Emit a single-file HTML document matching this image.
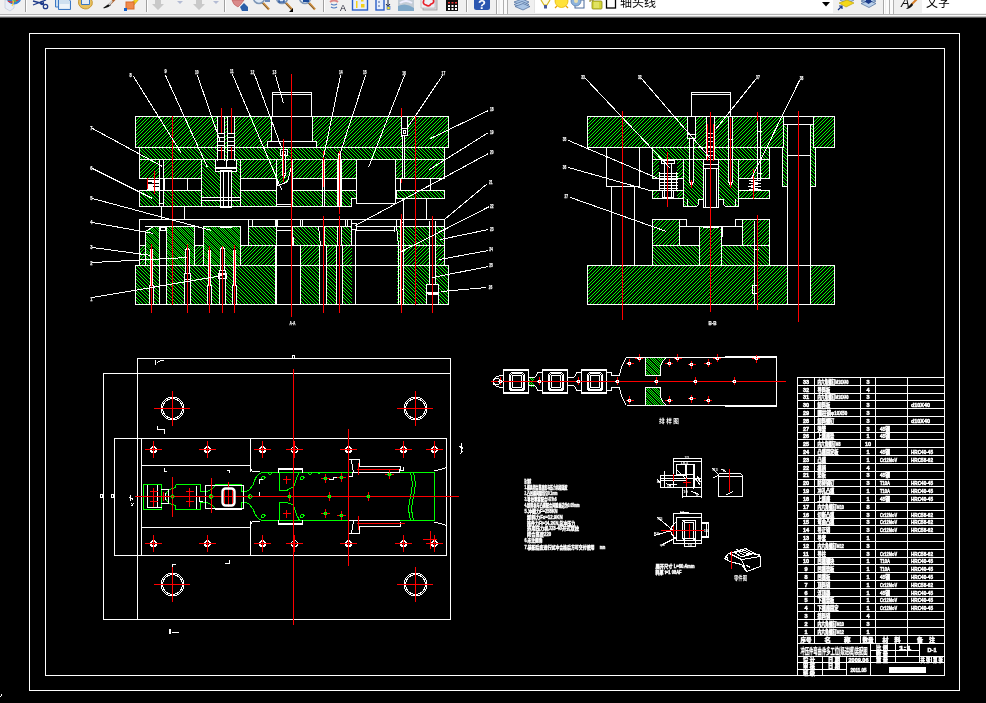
<!DOCTYPE html>
<html><head><meta charset="utf-8"><title>CAD</title>
<style>
html,body{margin:0;padding:0;background:#000;overflow:hidden}
body{width:986px;height:703px;position:relative;font-family:"Liberation Sans","Noto Sans CJK SC",sans-serif}
svg{position:absolute;left:0;top:0;display:block;will-change:transform}
.n{font:bold 6px "Liberation Sans","Noto Sans CJK SC",sans-serif;fill:#fff;text-anchor:middle;stroke:#fff;stroke-width:.25px}
.d{font:bold 4px "Liberation Sans",sans-serif;fill:#fff;text-anchor:middle}
.t{font:4.6px "Liberation Sans","Noto Sans CJK SC",sans-serif;fill:#fff;stroke:#fff;stroke-width:.4px}
.tt{font:bold 5.5px "Liberation Sans","Noto Sans CJK SC",sans-serif;fill:#fff;stroke:#fff;stroke-width:.5px}
.tk{font:bold 6px "Liberation Sans","Noto Sans CJK SC",sans-serif;fill:#000}
.tz{font:bold 8.5px "Liberation Sans","Noto Sans CJK SC",sans-serif;fill:#fff;stroke:#fff;stroke-width:.3px}
.tb{font:6px "Liberation Sans","Noto Sans CJK SC",sans-serif;fill:#fff;font-weight:bold}
#tb{position:absolute;left:0;top:0;width:986px;height:18px;background:#f0f0f0;overflow:hidden}
</style></head><body>
<svg width="986" height="703" viewBox="0 0 986 703">
<defs>
<pattern id="ha" width="7" height="7" patternUnits="userSpaceOnUse"><path d="M0 0h1v1h-1zM0 4h1v1h-1zM1 3h1v1h-1zM1 6h1v1h-1zM2 2h1v1h-1zM2 5h1v1h-1zM3 1h1v1h-1zM3 4h1v1h-1zM4 0h1v1h-1zM4 3h1v1h-1zM5 2h1v1h-1zM5 6h1v1h-1zM6 1h1v1h-1zM6 5h1v1h-1z" fill="#0f0" shape-rendering="crispEdges"/></pattern>
<pattern id="hb" width="7" height="7" patternUnits="userSpaceOnUse"><path d="M0 0h1v1h-1zM0 3h1v1h-1zM1 1h1v1h-1zM1 4h1v1h-1zM2 2h1v1h-1zM2 5h1v1h-1zM3 3h1v1h-1zM3 6h1v1h-1zM4 0h1v1h-1zM4 4h1v1h-1zM5 1h1v1h-1zM5 5h1v1h-1zM6 2h1v1h-1zM6 6h1v1h-1z" fill="#0f0" shape-rendering="crispEdges"/></pattern>
<pattern id="hx" width="3" height="3" patternUnits="userSpaceOnUse"><path d="M0 0h1v1h-1zM1 1h1v1h-1zM2 2h1v1h-1zM0 2h1v1h-1zM2 0h1v1h-1z" fill="#0f0" shape-rendering="crispEdges"/></pattern>
<pattern id="hd" width="7" height="7" patternUnits="userSpaceOnUse"><path d="M0 0h1v1h-1zM0 4h1v1h-1zM1 3h1v1h-1zM1 6h1v1h-1zM2 2h1v1h-1zM2 5h1v1h-1zM3 1h1v1h-1zM3 4h1v1h-1zM4 0h1v1h-1zM4 3h1v1h-1zM5 2h1v1h-1zM5 6h1v1h-1zM6 1h1v1h-1zM6 5h1v1h-1z" fill="#0f0" shape-rendering="crispEdges"/></pattern>
<pattern id="hc" width="7" height="7" patternUnits="userSpaceOnUse"><path d="M0 0h1v1h-1zM0 2h1v1h-1zM0 5h1v1h-1zM1 1h1v1h-1zM1 3h1v1h-1zM1 6h1v1h-1zM2 0h1v1h-1zM2 2h1v1h-1zM2 4h1v1h-1zM3 1h1v1h-1zM3 3h1v1h-1zM3 5h1v1h-1zM4 2h1v1h-1zM4 4h1v1h-1zM4 6h1v1h-1zM5 0h1v1h-1zM5 3h1v1h-1zM5 5h1v1h-1zM6 1h1v1h-1zM6 4h1v1h-1zM6 6h1v1h-1z" fill="#0f0" shape-rendering="crispEdges"/></pattern>
</defs>
<rect width="986" height="703" fill="#000"/>
<g shape-rendering="crispEdges">
<rect x="135" y="116" width="314" height="32" fill="url(#ha)"/>
<rect x="139" y="147" width="306" height="13" fill="url(#hb)"/>
<rect x="139" y="159" width="306" height="20" fill="url(#ha)"/>
<rect x="139" y="190" width="306" height="17" fill="url(#hb)"/>
<rect x="201" y="159" width="40" height="39" fill="#000"/>
<rect x="201" y="159" width="40" height="39" fill="url(#hb)"/>
<rect x="201" y="200" width="40" height="7" fill="#000"/>
<rect x="201" y="200" width="40" height="7" fill="url(#hb)"/>
<rect x="276" y="178" width="17" height="13" fill="#000"/>
<polygon points="277,177 292,177 288,182 283.5,184 277,186" fill="url(#ha)"/>
<rect x="145" y="226" width="300" height="20" fill="url(#hb)"/>
<rect x="139" y="245" width="306" height="21" fill="url(#hd)"/>
<rect x="135" y="265" width="314" height="40" fill="url(#hb)"/>
<rect x="145" y="226" width="15" height="39" fill="#000"/>
<rect x="145" y="226" width="15" height="39" fill="url(#hc)"/>
<rect x="166" y="226" width="29" height="39" fill="#000"/>
<rect x="166" y="226" width="29" height="39" fill="url(#hc)"/>
<rect x="203" y="226" width="38" height="39" fill="#000"/>
<rect x="203" y="226" width="38" height="39" fill="url(#hc)"/>
<rect x="352" y="223" width="5" height="7" fill="url(#ha)"/>
<rect x="396" y="219" width="49" height="8" fill="url(#ha)"/>
<rect x="587" y="116" width="248" height="32" fill="url(#ha)"/>
<rect x="652" y="147" width="118" height="13" fill="url(#hb)"/>
<rect x="652" y="159" width="118" height="20" fill="url(#ha)"/>
<rect x="652" y="190" width="118" height="9" fill="url(#ha)"/>
<rect x="683" y="159" width="56" height="49" fill="#000"/>
<polygon points="683.5,159.5 738.5,159.5 738.5,206 725.5,206 723.5,204 723.5,199 698.5,199 698.5,204 696.5,206 683.5,206" fill="url(#hb)"/>
<rect x="783" y="116" width="31" height="32" fill="#000"/>
<rect x="783" y="124" width="5" height="24" fill="url(#hb)"/>
<rect x="810" y="124" width="4" height="24" fill="url(#hb)"/>
<rect x="782" y="147" width="6" height="40" fill="url(#hb)"/>
<rect x="810" y="147" width="6" height="40" fill="url(#hb)"/>
<rect x="587" y="265" width="248" height="40" fill="url(#ha)"/>
<rect x="652" y="219" width="118" height="27" fill="url(#ha)"/>
<rect x="652" y="245" width="118" height="21" fill="url(#hb)"/>
<rect x="699" y="226" width="23" height="40" fill="#000"/>
<rect x="699" y="226" width="23" height="40" fill="url(#ha)"/>
<rect x="529" y="377" width="5" height="10" fill="url(#hc)"/>
<path d="M646 358H666Q661 362 660 368V375H646Z" fill="url(#hc)"/>
<path d="M646 405H666Q661 401 660 395V388H646Z" fill="url(#hc)"/>
<g fill="#000">
<rect x="271" y="116" width="42" height="32"/>
<rect x="267" y="141" width="50" height="7"/>
<rect x="217" y="116" width="8" height="50"/>
<rect x="227" y="116" width="8" height="50"/>
<rect x="215" y="159" width="22" height="13"/>
<rect x="201" y="198" width="40" height="2"/>
<rect x="220" y="170" width="12" height="38"/>
<rect x="139" y="179" width="63" height="11"/>
<rect x="241" y="179" width="36" height="11"/>
<rect x="293" y="179" width="152" height="11"/>
<rect x="159" y="159" width="5" height="48"/>
<rect x="276" y="184" width="17" height="23"/>
<polygon points="277,180 277,186 292,186 292,166 288,182 282,184.5"/>
<rect x="280" y="149" width="8" height="7"/>
<rect x="282" y="155" width="4" height="22"/>
<rect x="323" y="151" width="2" height="56"/>
<rect x="338" y="151" width="4" height="56"/>
<rect x="356" y="159" width="40" height="45"/>
<rect x="351" y="198" width="6" height="9"/>
<rect x="356" y="203" width="41" height="5"/>
<rect x="396" y="179" width="50" height="11"/>
<rect x="396" y="199" width="50" height="10"/>
<rect x="401" y="116" width="7" height="21"/>
<rect x="402" y="136" width="3" height="43"/>
<polygon points="145,226 153.5,226 145,232"/>
<rect x="140" y="220" width="6" height="25"/>
<rect x="159" y="226" width="8" height="79"/>
<rect x="195" y="226" width="9" height="19"/>
<rect x="241" y="220" width="8" height="25"/>
<rect x="140" y="220" width="304" height="6"/>
<rect x="276" y="226" width="17" height="79"/>
<rect x="276" y="245" width="25" height="60"/>
<polygon points="318.5,226 322,226 322,246 320.5,246"/>
<rect x="321" y="226" width="4" height="20"/>
<rect x="337" y="226" width="5" height="20"/>
<rect x="352" y="226" width="45" height="79"/>
<rect x="400" y="221" width="4" height="84"/>
<rect x="429" y="221" width="7" height="64"/>
<rect x="426" y="284" width="13" height="21"/>
<rect x="241" y="245" width="1" height="1"/>
<rect x="300" y="246" width="1" height="58"/>
<rect x="319" y="245" width="8" height="60"/>
<rect x="336" y="245" width="7" height="60"/>
<rect x="150" y="248" width="3" height="38"/>
<rect x="149" y="285" width="5" height="20"/>
<rect x="185" y="248" width="5" height="26"/>
<rect x="184" y="273" width="7" height="32"/>
<rect x="208" y="249" width="3" height="37"/>
<rect x="207" y="285" width="5" height="20"/>
<rect x="220" y="247" width="5" height="24"/>
<rect x="219" y="270" width="7" height="35"/>
<rect x="233" y="249" width="3" height="37"/>
<rect x="232" y="285" width="5" height="20"/>
<rect x="703" y="159" width="16" height="49"/>
<rect x="706" y="116" width="9" height="44"/>
<rect x="687" y="116" width="9" height="21"/>
<rect x="689" y="139" width="5" height="45"/>
<rect x="728" y="116" width="5" height="68"/>
<rect x="757" y="116" width="4" height="64"/>
<rect x="652" y="179" width="32" height="11"/>
<rect x="739" y="179" width="31" height="11"/>
<rect x="659" y="160" width="18" height="38"/>
<rect x="787" y="265" width="24" height="40"/>
<rect x="679" y="219" width="8" height="8"/>
<rect x="735" y="219" width="8" height="8"/>
<rect x="686" y="219" width="50" height="7"/>
<rect x="679" y="226" width="21" height="20"/>
<rect x="721" y="226" width="22" height="20"/>
<rect x="754" y="221" width="4" height="84"/>
</g>
<path fill="none" stroke="#0f0" stroke-width="1" d="M143 484.5H162M143 509.5H162M143.5 484V510M161.5 484V510M175.5 484.5V487.5Q165 490 165.5 496.5Q165 503 175.5 505.5V509.5M175.5 484.5H200.5V491.5H206.5M175.5 509.5H200.5V502.5H206.5M206.5 491.5Q213 490 215.5 484.5H241.5V491.5H246.5Q250 490 253.5 484M206.5 502.5Q213 504 215.5 509.5H241.5V502.5H246.5Q250 504 253.5 510M216 484.5H242M253.5 484Q256 474 262.5 472.5H434.5V520.5H262.5Q256 519 253.5 510M262 472.5H435M262 520.5H435M410.5 472.5Q414 484 410.5 496.5Q407 509 410.5 520.5M413.5 472.5Q417 484 413.5 496.5Q410 509 413.5 520.5M279.5 472.5V490.5H286.5Q291 488 293.5 487M279.5 520.5V502.5H286.5Q291 504 293.5 505M293.5 488Q296 478 299.5 472.5M293.5 505Q296 515 299.5 520.5M261.5 477.5q2 -2 3.5 0q-1 2.500 -3.500 2zM261.5 515.5q2 -2 3.5 0q-1 2.500 -3.500 2zM300.5 477.5q2 -2 3.5 0q-1 2.500 -3.500 2zM300.5 515.5q2 -2 3.5 0q-1 2.500 -3.500 2zM268 472.5q2 4 4 0M308 472.5q2 4 4 0M318 472.5q1 3 2 0"/>
<path fill="none" stroke="#fff" stroke-width="1" d="M29 33.5H960M29 690.5H960M29.5 33V691M959.5 33V691M45 48.5H945M45 675.5H945M45.5 48V676M944.5 48V676M135 116.5H449M135 147.5H449M135.5 116V148M448.5 116V148M139 147.5H445M139 159.5H445M139.5 147V160M444.5 147V160M139.5 159V179M444.5 159V179M139 159.5H445M139 178.5H202M240 178.5H277M292 178.5H357M395 178.5H445M139 190.5H202M240 190.5H277M292 190.5H357M395 190.5H445M139.5 190V207M272.5 92V117M272 92.5H312M311.5 92V117M272 94.5H312M271.5 116V142M312.5 116V142M271 116.5H313M267 141.5H317M267 147.5H317M267.5 141V148M316.5 141V148M217.5 116V161M224.5 116V161M218 133.5H224M218 137.5H224M218 141.5H224M218 145.5H224M218 150.5H224M227.5 116V161M234.5 116V161M228 133.5H234M228 137.5H234M228 141.5H234M228 145.5H234M228 150.5H234M215 159.5H237M215 171.5H237M215.5 159V172M236.5 159V172M215 167.5H237M215 168.5H237M226.5 159V168M201.5 159V207M240.5 159V207M201 197.5H241M201 200.5H241M220 170.5H232M220 207.5H232M220.5 170V208M231.5 170V208M223.5 171V208M228.5 171V208M159.5 159V207M163.5 159V207M159 206.5H164M159 203.5H164M147 180.5H159M147 181.5H159M147 184.5H159M147 185.5H159M147 187.5H159M147 188.5H159M147 189.5H159M152 182.5H159M147 186.5H153M187.5 178V191M164.5 178V191M276.5 159V207M292.5 160V207M277.5 180.5V185.5L283.5 183.5L287.5 181.5L291.5 166.500M276 204.5H293M276 206.5H293M279.5 185.5L282.5 190.5M280 149.5H288M280 155.5H288M280.5 149V156M287.5 149V156M282 151.5H286M282 154.5H286M282.5 151V155M285.5 151V155M282.5 155V175M285.5 155V175M282.5 174.5L284 177.5L285.5 174.5M282 173.5H286M322.5 159V207M324.5 159V207M337.5 159V207M341.5 159V207M338.5 153V207M340.5 153V207M321 206.5H326M337 206.5H343M356 159.5H396M356 203.5H396M356.5 159V204M395.5 159V204M351 198.5H357M351.5 198V207M139 206.5H352M396 198.5H445M444.5 190V199M396.5 190V199M400.5 178V191M430.5 178V191M403.5 198V220M426.5 198V220M401.5 116V137M407.5 116V136M401 128.5H408M401 135.5H408M401.5 128V136M407.5 128V136M403 130.5H406M403 133.5H406M403.5 130V134M405.5 130V134M402.5 136V179M404.5 135V179M402 178.5H406M161.5 206V220M184.5 206V220M139 219.5H445M139.5 219V266M444.5 219V266M135 265.5H449M135 304.5H449M135.5 265V305M448.5 265V305M139 245.5H146M194 245.5H204M240 245.5H445M145.5 231V266M159.5 226V266M166.5 226V266M194.5 226V266M203.5 226V266M240.5 226V266M145.5 231V246M145.5 231.5L153.5 226.5M153 226.5H160M145.5 231V266M159.5 226V305M166.5 226V305M159 230.5H167M160 227.5H166M160 230.5H166M160.5 227V231M165.5 227V231M248.5 219V246M145 226.5H195M203 226.5H241M248 226.5H277M220 227.5H232M248 219.5H253M248 226.5H253M248.5 219V227M252.5 219V227M252 219.5H276M252 226.5H276M252.5 219V227M275.5 219V227M277 219.5H301M277 226.5H301M277.5 219V227M300.5 219V227M302 219.5H346M302 226.5H346M302.5 219V227M345.5 219V227M347 219.5H352M347 226.5H352M347.5 219V227M351.5 219V227M276.5 219V305M292.5 226V246M276 230.5H293M276 226.5H293M300.5 245V305M293.5 237V246M318.5 226.5L320.5 245.5M292 226.5H319M324.5 226V246M324 226.5H338M337.5 226V246M341.5 226V246M341 226.5H352M351 223.5H357M351 229.5H357M351.5 223V230M356.5 223V230M351.5 226V246M355.5 229V246M356 226.5H397M356 230.5H395M394.5 226V232M355.5 245V305M396.5 226.5L398.5 245.5M398.5 245V305M396 226.5H445M396.5 219V227M400.5 221V305M403.5 221V305M400 289.5H404M400 219.5H404M400 222.5H404M400.5 219V223M403.5 219V223M429.5 221V285M435.5 221V285M426.5 284V305M438.5 284V305M426 284.5H439M426 293.5H439M426.5 284V294M438.5 284V294M427 292.5H439M428 294.5H438M432 277.5H436M432.5 221V278M319.5 245V305M326.5 245V305M336.5 245V305M342.5 245V305M275.5 245V305M150.5 285V250L151.5 248L152.5 250V285M149.5 285V305M153.5 285V305M149 285.5H154M185.5 273V250L187.5 248L189.5 250V273M184.5 273V305M190.5 273V305M184 273.5H191M208.5 285V251L209.5 249L210.5 251V285M207.5 285V305M211.5 285V305M207 285.5H212M220.5 270V249L222.5 247L224.5 249V270M219.5 270V305M225.5 270V305M219 270.5H226M233.5 285V251L234.5 249L235.5 251V285M232.5 285V305M236.5 285V305M232 285.5H237M184 273.5H191M184 279.5H191M184.5 273V280M190.5 273V280M218 273.5H227M218 278.5H227M218.5 273V279M226.5 273V279M219 274.5H227M0.5 697.5L1.5 694.5M587.5 116V148M834.5 116V148M587 116.5H835M587 147.5H783M815 147.5H835M652 147.5H770M652 159.5H770M652.5 147V160M769.5 147V160M652.5 159V179M769.5 159V179M652 178.5H684M738 178.5H770M652.5 190V199M769.5 190V199M652 190.5H684M738 190.5H770M652 198.5H684M738 198.5H770M691.5 92V117M691 92.5H731M730.5 92V117M691 94.5H731M683.5 159V207M683 206.5H697M696.5 206.5L698.5 204.5M698.5 199V205M698 199.5H704M738.5 159V207M725 206.5H739M725.5 206.5L723.5 204.5M723.5 199V205M718 199.5H724M687.5 199V207M735.5 199V207M703 168.5H719M703 207.5H719M703.5 168V208M718.5 168V208M705.5 169V208M716.5 169V208M703 159.5H719M703 168.5H719M703.5 159V169M718.5 159V169M704 164.5H719M706.5 116V160M714.5 116V160M708 133.5H714M708 137.5H714M708 141.5H714M708 146.5H714M708 151.5H714M708 155.5H714M687.5 116V137M695.5 116V137M687 134.5H696M687 138.5H696M687.5 134V139M695.5 134V139M689.5 139V182M693.5 139V182M689.5 181.5L691.5 185.5L693.5 181.5M728.5 116V182M732.5 116V182M728.5 181.5L730.5 185.5L732.5 181.5M728 139.5H733M757.5 116V180M760.5 116V180M757 131.5H762M757 173.5H762M661 160.5H675M661 163.5H675M661.5 160V164M674.5 160V164M664.5 163V198M671.5 163V198M660 173.5H678M660 176.5H678M660 179.5H678M660 182.5H678M660 185.5H678M660 188.5H678M659.5 172V191M676.5 172V191M662 190.5H674M662 197.5H674M662.5 190V198M673.5 190V198M749 180.5H761M749 183.5H761M749 186.5H761M749 189.5H761M749.5 180.5L759.5 183.5L749.5 186.5L759.5 189.5M606 147.5H640M606 186.5H640M606.5 147V187M639.5 147V187M611.5 186V266M634.5 186V266M783.5 116V148M813.5 116V148M783 124.5H814M782 147.5H784M813 147.5H816M782.5 147V187M815.5 147V187M782 186.5H788M810 186.5H816M787.5 124V305M810.5 124V305M787 155.5H811M587 265.5H835M587 304.5H835M587.5 265V305M834.5 265V305M652.5 219V266M769.5 219V266M652 265.5H770M652 219.5H687M735 219.5H770M679 219.5H687M679 226.5H687M679.5 219V227M686.5 219V227M735 219.5H743M735 226.5H743M735.5 219V227M742.5 219V227M679 226.5H743M679.5 226V246M742.5 226V246M652 245.5H700M721 245.5H770M699.5 226V266M721.5 226V266M703 227.5H719M722.5 227V237M754.5 221V305M757.5 221V305M752 285.5H758M752 293.5H758M752.5 285V294M757.5 285V294M754 249.5H759M137.5 358V620M137 358.5H451M450.5 358V620M103 373.5H451M103.5 373V620M103 619.5H451M114 438.5H447M114 555.5H447M114.5 438V556M446.5 438V556M141.5 438V556M250.5 438V471M250.5 523V556M141 465.5H251M141 527.5H251M161 408.5a11.5 11.5 0 1 0 23 0a11.5 11.5 0 1 0 -23 0M162.5 408.5a10 10 0 1 0 20 0a10 10 0 1 0 -20 0M161 584.5a11.5 11.5 0 1 0 23 0a11.5 11.5 0 1 0 -23 0M162.5 584.5a10 10 0 1 0 20 0a10 10 0 1 0 -20 0M404 408.5a11.5 11.5 0 1 0 23 0a11.5 11.5 0 1 0 -23 0M405.5 408.5a10 10 0 1 0 20 0a10 10 0 1 0 -20 0M404 584.5a11.5 11.5 0 1 0 23 0a11.5 11.5 0 1 0 -23 0M405.5 584.5a10 10 0 1 0 20 0a10 10 0 1 0 -20 0M150.5 449.5a3 3 0 1 0 6 0a3 3 0 1 0 -6 0M151.5 449.5a2 2 0 1 0 4 0a2 2 0 1 0 -4 0M204.5 449.5a3 3 0 1 0 6 0a3 3 0 1 0 -6 0M205.5 449.5a2 2 0 1 0 4 0a2 2 0 1 0 -4 0M259.5 449.5a3 3 0 1 0 6 0a3 3 0 1 0 -6 0M260.5 449.5a2 2 0 1 0 4 0a2 2 0 1 0 -4 0M291.5 449.5a3 3 0 1 0 6 0a3 3 0 1 0 -6 0M345.5 449.5a3 3 0 1 0 6 0a3 3 0 1 0 -6 0M346.5 449.5a2 2 0 1 0 4 0a2 2 0 1 0 -4 0M400.5 449.5a3 3 0 1 0 6 0a3 3 0 1 0 -6 0M401.5 449.5a2 2 0 1 0 4 0a2 2 0 1 0 -4 0M431.5 449.5a3 3 0 1 0 6 0a3 3 0 1 0 -6 0M432.5 449.5a2 2 0 1 0 4 0a2 2 0 1 0 -4 0M150.5 543.5a3 3 0 1 0 6 0a3 3 0 1 0 -6 0M151.5 543.5a2 2 0 1 0 4 0a2 2 0 1 0 -4 0M204.5 543.5a3 3 0 1 0 6 0a3 3 0 1 0 -6 0M205.5 543.5a2 2 0 1 0 4 0a2 2 0 1 0 -4 0M259.5 543.5a3 3 0 1 0 6 0a3 3 0 1 0 -6 0M260.5 543.5a2 2 0 1 0 4 0a2 2 0 1 0 -4 0M291.5 543.5a3 3 0 1 0 6 0a3 3 0 1 0 -6 0M345.5 543.5a3 3 0 1 0 6 0a3 3 0 1 0 -6 0M346.5 543.5a2 2 0 1 0 4 0a2 2 0 1 0 -4 0M400.5 543.5a3 3 0 1 0 6 0a3 3 0 1 0 -6 0M401.5 543.5a2 2 0 1 0 4 0a2 2 0 1 0 -4 0M431.5 543.5a3 3 0 1 0 6 0a3 3 0 1 0 -6 0M432.5 543.5a2 2 0 1 0 4 0a2 2 0 1 0 -4 0M147.5 485V508M157.5 485V508M147 507.5H162M161 489.5H169M168.5 489V504M161 503.5H169M165.5 493V500M196.5 486V509M199 496.5H204M199.5 496V502M199 501.5H203M205 485.5H244M205 508.5H244M205.5 485V509M243.5 485V509M215 509.5H242M278.5 468V473M278 468.5H303M302.5 468V473M278.5 520V525M278 524.5H303M302.5 520V525M279 469.5H303M279 523.5H303M250.5 468.5L252.5 471.5M252 471.5H260M250.5 524.5L252.5 521.5M252 521.5H260M259.5 479V484M259 479.5H263M255 496.5H260M259.5 492V497M329 479.5H334M333.5 477V480M333 477.5H338M348 459.5H360M359.5 459V467M359 466.5H401M400.5 466V471M400 470.5H404M403.5 467V471M348.5 459V477M348 476.5H353M352.5 472V477M351.5 460.5L353.5 472.5M353 472.5H400M399.5 469V473M348 533.5H360M359.5 526V534M359 526.5H401M400.5 522V527M348.5 520V534M348 520.5H353M351.5 533.5L353.5 520.5M353 520.5H400M434.5 470.5Q441 470 446.5 467.5M434.5 522.5Q441 523 446.5 525.5M250.5 468.5V472M250.5 524.5V521M292 355.5H295M292 358.5H295M292.5 355V359M294.5 355V359M155.5 360V365M157.5 362.5L160.5 360.5M160 360.5H164M157.5 426V430M157 429.5H165M164.5 429V434M164.5 468V472M164 471.5H167M227 470.5H230M229.5 470V473M172.5 564V569M172 564.5H176M225 563.5H230M229.5 560V564M169 629.5H171M169 633.5H171M169.5 629V634M170.5 629V634M172 632.5H179M100 494.5H103M100 497.5H103M100.5 494V498M102.5 494V498M111 494.5H114M111 497.5H114M111.5 494V498M113.5 494V498M130.5 494.5V500.5M129.5 497.5L133.5 499.5M131.5 503.5L133.5 506.5M130.5 506.5L133.5 503.5M461.5 442.5V452.5M459.5 446.5L463.5 448.5M459.5 454.5L462.5 451.5M493 381.5a3.5 3.5 0 1 0 7 0a3.5 3.5 0 1 0 -7 0M503 369.5H529M503 393.5H529M503.5 369V394M528.5 369V394M503 370.5H529M503 392.5H529M512.5 372.5H521.5Q524.5 372.5 524.5 375.5V387.5Q524.5 390.5 521.5 390.5H512.5Q509.5 390.5 509.5 387.5V375.5Q509.5 372.5 512.5 372.5ZM513.5 373.5H520.5Q523.5 373.5 523.5 376.5V386.5Q523.5 389.5 520.5 389.5H513.5Q510.5 389.5 510.5 386.5V376.5Q510.5 373.5 513.5 373.5ZM512.5 375.5H521.5V387.5H512.5ZM542 369.5H568M542 393.5H568M542.5 369V394M567.5 369V394M542 370.5H568M542 392.5H568M551.5 372.5H560.5Q563.5 372.5 563.5 375.5V387.5Q563.5 390.5 560.5 390.5H551.5Q548.5 390.5 548.5 387.5V375.5Q548.5 372.5 551.5 372.5ZM552.5 373.5H559.5Q562.5 373.5 562.5 376.5V386.5Q562.5 389.5 559.5 389.5H552.5Q549.5 389.5 549.5 386.5V376.5Q549.5 373.5 552.5 373.5ZM551.5 375.5H560.5V387.5H551.5ZM581 369.5H607M581 393.5H607M581.5 369V394M606.5 369V394M581 370.5H607M581 392.5H607M590.5 372.5H599.5Q602.5 372.5 602.5 375.5V387.5Q602.5 390.5 599.5 390.5H590.5Q587.5 390.5 587.5 387.5V375.5Q587.5 372.5 590.5 372.5ZM591.5 373.5H598.5Q601.5 373.5 601.5 376.5V386.5Q601.5 389.5 598.5 389.5H591.5Q588.5 389.5 588.5 386.5V376.5Q588.5 373.5 591.5 373.5ZM590.5 375.5H599.5V387.5H590.5ZM503.5 375.5Q494 375.5 493.5 381.5Q494 387.5 503.5 387.5M528.5 377.5H533.5Q536.5 377.5 537.5 372.5H542.5M528.5 385.5H533.5Q536.5 385.5 537.5 390.5H542.5M567.5 377.5H572.5Q575.5 377.5 576.5 372.5H581.5M567.5 385.5H572.5Q575.5 385.5 576.5 390.5H581.5M606.5 372.5H611.5V375.5H619.5Q621 366 626.5 357.5M606.5 390.5H611.5V387.5H619.5Q621 397 626.5 405.5M626.5 357.5H776.5V405.5H626.5M725 356.5H777M725 406.5H777M645.5 357.5H666.5Q661 362 660.5 368V375.5H645.5ZM645.5 405.500H666.5Q661 401 660.5 395V387.500H645.5ZM673 458.5H702M673 487.5H702M673.5 458V488M701.5 458V488M673 461.5H702M676 464.5H695M676 474.5H695M676.5 464V475M694.5 464V475M686.5 464V497M694.5 464V488M660 475.5H687M660 487.5H687M660.5 475V488M686.5 475V488M664.5 471V484M660 480.5H687M682.5 487V498M701.5 487V498M682 496.5H702M676.5 469.5L686.5 479.5M694.5 477.5L700.5 485.5M657.5 479.5L660.5 483.5M667 484.5H677M691.5 491.5L699.5 494.5M718.1 496.4V476.4Q718.1 473.5 721 473.5H739.5Q742.4 473.5 742.4 476.4V496.4ZM718 476.5H743M712.5 468.5L718.5 474.5M713.5 477.5L718.5 475.5M721.5 469.5L726.5 471.5M726.5 494.5L733.5 491.5M673 513.5H702M673 543.5H702M673.5 513V544M701.5 513V544M676 517.5H702M676 540.5H702M676.5 517V541M701.5 517V541M684 543.5H696M684 546.5H696M684.5 543V547M695.5 543V547M676.4 521.9Q665 530.6 676.4 539Q676.4 539 676.4 539M685.8 520.1H692.8Q695.8 520.1 695.8 523.1V537.1Q695.8 540.1 692.8 540.1H685.8Q682.8 540.1 682.8 537.1V523.1Q682.8 520.1 685.8 520.1ZM684.8 522.1H693.8V538.1H684.8ZM701 523.5H709M701 537.5H709M701.5 523V538M708.5 523V538M657.5 517.5L674.5 531.5M654.5 535.5L674.5 529.5M662.5 544.5L676.5 537.5M680 512.5H689M677 464.5H694M685.5 464V475M693.5 464V489M685.5 464V475M677 464.5H694M664.5 472V488M660 478.5H702M673 461.5H702M697.5 476.5L700.5 482.5M666.5 483.5L671.5 486.5M684.5 520V539M695.5 520V539M682 520.5H696M682 538.5H696M684.5 540V547M695.5 540V547M684 543.5H696M701 522.5H709M701 536.5H709M706.5 522V537M736.5 549.5L747.5 553.5M747.5 553.5L760.5 554.5M739.5 552.5L744.5 555.5M744.5 555.5L753.5 552.5M746.5 565.5L750.5 567.5M724.5 558.5L728.5 553.5L745.5 548.5L760.5 556.5V566.5L746.5 571.5L741.5 564.5L729.5 561.5ZM729.5 553.5L741.5 559.5L760.5 556.5M741.5 559.5L746.500 571.500M734 552.5L745 550.5L752 554L742 557ZM725 558.5a1.5 1.5 0 1 0 3 0a1.5 1.5 0 1 0 -3 0M797 377.5H945M797 385.5H945M797 393.5H945M797 400.5H945M797 408.5H945M797 416.5H945M797 424.5H945M797 432.5H945M797 439.5H945M797 447.5H945M797 455.5H945M797 463.5H945M797 471.5H945M797 479.5H945M797 486.5H945M797 494.5H945M797 502.5H945M797 510.5H945M797 518.5H945M797 525.5H945M797 533.5H945M797 541.5H945M797 549.5H945M797 557.5H945M797 564.5H945M797 572.5H945M797 580.5H945M797 588.5H945M797 596.5H945M797 603.5H945M797 611.5H945M797 619.5H945M797 627.5H945M797 635.5H945M797 643.5H945M797.5 377V644M814.5 377V644M860.5 377V644M875.5 377V644M907.5 377V644M944.5 377V644M797.5 643V676M944.5 643V676M870.5 643V676M797 656.5H871M797 662.5H847M797 669.5H847M822.5 656V676M846.5 656V676M846 662.5H871M870 650.5H920M870 656.5H945M870 662.5H945M895.5 643V663M919.5 643V663M907.5 643V657M931.5 656V663"/>
<path fill="none" stroke="#f00" stroke-width="1" d="M154.5 171V194M147.5 178V189M283.5 139V182M172.5 116V305M291.5 74V317M415.5 116V305M221.5 108V133M231.5 108V133M221.5 147V159M231.5 147V159M401.5 108V117M401.5 179V183M323.5 151V187M339.5 151V206M339.5 207V214M339.5 216V313M323.5 216V313M401.5 214V313M432.5 216V313M151.5 244V313M187.5 244V313M209.5 246V313M222.5 246V313M234.5 245V313M622.5 111V320M710.5 112V312M757.5 112V121M757.5 215V310M667.5 152V207M691.5 180V188M730.5 118V188M753.5 169V199M798.5 111V322M707.5 124V161M713.5 124V161M154 408.5H190M172.5 391V426M154 584.5H190M172.5 567V602M397 408.5H433M415.5 391V426M397 584.5H433M415.5 567V602M145 449.5H162M153.5 441V458M199 449.5H216M207.5 441V458M254 449.5H271M262.5 441V458M286 449.5H303M294.5 441V458M340 449.5H357M348.5 441V458M395 449.5H412M403.5 441V458M426 449.5H443M434.5 441V458M145 543.5H162M153.5 535V552M199 543.5H216M207.5 535V552M254 543.5H271M262.5 535V552M286 543.5H303M294.5 535V552M340 543.5H357M348.5 535V552M395 543.5H412M403.5 535V552M426 543.5H443M434.5 535V552M423 539.5H437M430.5 531V549M135 496.5H459M293.5 369V625M348.5 429V566M150 491.5H158M150 501.5H158M153.5 488V507M163.5 492V501M172.5 477V517M186 491.5H194M186 501.5H194M189.5 488V507M211.5 478V513M228.5 482V507M224.5 490V504M232.5 490V504M283 479.5H291M286.5 476V484M283 513.5H291M286.5 510V518M285 496.5H294M289.5 492V501M325 496.5H334M329.5 492V501M364 496.5H373M368.5 492V501M321 478.5H330M325.5 474V483M337 477.5H346M341.5 473V482M321 513.5H330M325.5 509V518M337 515.5H346M341.5 511V520M385 474.5H394M389.5 470V479M357 469.5H399M358.5 463V475M357 523.5H405M358.5 516V530M491 381.5H786M626 363.5H634M629.5 359V367M635 358.5H643M639.5 354V362M665 363.5H673M669.5 359V367M674 358.5H682M677.5 354V362M688 364.5H696M691.5 361V369M704 363.5H712M708.5 359V367M713 358.5H721M717.5 354V362M496 381.5H504M500.5 377V385M535 381.5H543M539.5 377V385M574 381.5H582M578.5 377V385M613 381.5H621M617.5 377V385M653 381.5H661M656.5 377V385M692 381.5H700M695.5 377V385M626 400.5H634M629.5 396V404M665 400.5H673M669.5 396V404M688 398.5H696M691.5 395V403M704 400.5H712M708.5 396V404M704 363.5H712M708.5 359V367M713 358.5H721M717.5 354V362M752 358.5H760M756.5 355V363M692 381.5H700M695.5 377V385M731 381.5H739M734.5 377V385M704 400.5H712M708.5 396V404M673.5 474V481M686.5 478V487M683 482.5H691M729.5 469V492M661 530.5H704M689.5 524V538M673.5 526V535M731.5 551V569"/>
<path fill="none" stroke="#fff" stroke-width="1" d="M133.5 76.5L181.5 153.5M165.5 75.5L207.5 167.5M197.5 75.5L220.5 142.5M232.5 74.5L281.5 189.5M254.5 74.5L281.5 147.5M275.5 75.5L283.5 103.5M92.5 128.5L162.5 166.5M92.5 168.5L152.5 198.5M92.5 198.5L211.5 230.5M92.5 222.5L153.5 233.5M92.5 247.5L151.5 255.5M92.5 262.5L187.5 257.5M92.5 297.5L222.5 275.5M340.5 75.5L323.5 157.5M365.5 75.5L339.5 155.5M404.5 75.5L368.5 167.5M442.5 75.5L407.5 127.5M488.5 110.5L430.5 138.5M488.5 132.5L429.5 169.5M488.5 153.5L355.5 225.5M487.5 183.5L444.5 219.5M489.5 206.5L401.5 251.5M488.5 229.5L440.5 239.5M488.5 250.5L439.5 259.5M488.5 266.5L432.5 277.5M486.5 287.5L441.5 291.5M585.5 78.5L670.5 168.5M641.5 78.5L710.5 158.5M755.5 79.5L715.5 129.5M568.5 140.5L660.5 179.5M568.5 167.5L653.5 191.5M570.5 197.5L666.5 231.5M799.5 80.5L751.5 178.5M628 363.5a1.5 1.5 0 1 0 3 0a1.5 1.5 0 1 0 -3 0M638 358.5a1.5 1.5 0 1 0 3 0a1.5 1.5 0 1 0 -3 0M668 363.5a1.5 1.5 0 1 0 3 0a1.5 1.5 0 1 0 -3 0M676 358.5a1.5 1.5 0 1 0 3 0a1.5 1.5 0 1 0 -3 0M690 364.5a1.5 1.5 0 1 0 3 0a1.5 1.5 0 1 0 -3 0M707 363.5a1.5 1.5 0 1 0 3 0a1.5 1.5 0 1 0 -3 0M716 358.5a1.5 1.5 0 1 0 3 0a1.5 1.5 0 1 0 -3 0M499 381.5a1.5 1.5 0 1 0 3 0a1.5 1.5 0 1 0 -3 0M538 381.5a1.5 1.5 0 1 0 3 0a1.5 1.5 0 1 0 -3 0M577 381.5a1.5 1.5 0 1 0 3 0a1.5 1.5 0 1 0 -3 0M616 381.5a1.5 1.5 0 1 0 3 0a1.5 1.5 0 1 0 -3 0M655 381.5a1.5 1.5 0 1 0 3 0a1.5 1.5 0 1 0 -3 0M694 381.5a1.5 1.5 0 1 0 3 0a1.5 1.5 0 1 0 -3 0M628 400.5a1.5 1.5 0 1 0 3 0a1.5 1.5 0 1 0 -3 0M668 400.5a1.5 1.5 0 1 0 3 0a1.5 1.5 0 1 0 -3 0M690 398.5a1.5 1.5 0 1 0 3 0a1.5 1.5 0 1 0 -3 0M707 400.5a1.5 1.5 0 1 0 3 0a1.5 1.5 0 1 0 -3 0M707 363.5a1.5 1.5 0 1 0 3 0a1.5 1.5 0 1 0 -3 0M716 358.5a1.5 1.5 0 1 0 3 0a1.5 1.5 0 1 0 -3 0M755 358.5a1.5 1.5 0 1 0 3 0a1.5 1.5 0 1 0 -3 0M694 381.5a1.5 1.5 0 1 0 3 0a1.5 1.5 0 1 0 -3 0M733 381.5a1.5 1.5 0 1 0 3 0a1.5 1.5 0 1 0 -3 0M707 400.5a1.5 1.5 0 1 0 3 0a1.5 1.5 0 1 0 -3 0"/>
<path fill="none" stroke="#0f0" stroke-width="1" d="M170.7 496.5a1.8 1.8 0 1 0 3.6 0a1.8 1.8 0 1 0 -3.6 0M209.7 496.5a1.8 1.8 0 1 0 3.6 0a1.8 1.8 0 1 0 -3.6 0M248.7 496.5a1.8 1.8 0 1 0 3.6 0a1.8 1.8 0 1 0 -3.6 0M288 496.5a1.5 1.5 0 1 0 3 0a1.5 1.5 0 1 0 -3 0M328 496.5a1.5 1.5 0 1 0 3 0a1.5 1.5 0 1 0 -3 0M367 496.5a1.5 1.5 0 1 0 3 0a1.5 1.5 0 1 0 -3 0M324 478.5a1.5 1.5 0 1 0 3 0a1.5 1.5 0 1 0 -3 0M340 477.5a1.5 1.5 0 1 0 3 0a1.5 1.5 0 1 0 -3 0M324 513.5a1.5 1.5 0 1 0 3 0a1.5 1.5 0 1 0 -3 0M340 515.5a1.5 1.5 0 1 0 3 0a1.5 1.5 0 1 0 -3 0M388 474.5a1.5 1.5 0 1 0 3 0a1.5 1.5 0 1 0 -3 0"/>
</g>
<rect x="222.5" y="488.5" width="12" height="17" rx="3" fill="none" stroke="#fff" stroke-width="2.4"/>
<rect x="889" y="667" width="37" height="6" fill="#fff"/>
<text x="130.6" y="76.5" class="n" textLength="2.2" lengthAdjust="spacingAndGlyphs">8</text>
<text x="165.7" y="72.5" class="n" textLength="2.2" lengthAdjust="spacingAndGlyphs">9</text>
<text x="196.8" y="73.5" class="n" textLength="3.6" lengthAdjust="spacingAndGlyphs">10</text>
<text x="231.8" y="73" class="n" textLength="3.6" lengthAdjust="spacingAndGlyphs">11</text>
<text x="252.4" y="73.5" class="n" textLength="3.6" lengthAdjust="spacingAndGlyphs">12</text>
<text x="274.4" y="73.5" class="n" textLength="3.6" lengthAdjust="spacingAndGlyphs">13</text>
<text x="340.7" y="73.5" class="n" textLength="3.6" lengthAdjust="spacingAndGlyphs">14</text>
<text x="364.7" y="73.5" class="n" textLength="3.6" lengthAdjust="spacingAndGlyphs">15</text>
<text x="404" y="74.5" class="n" textLength="3.6" lengthAdjust="spacingAndGlyphs">16</text>
<text x="443.4" y="74.5" class="n" textLength="3.6" lengthAdjust="spacingAndGlyphs">17</text>
<text x="491.7" y="111.1" class="n" textLength="3.6" lengthAdjust="spacingAndGlyphs">18</text>
<text x="491.7" y="133.6" class="n" textLength="3.6" lengthAdjust="spacingAndGlyphs">19</text>
<text x="491.7" y="154.2" class="n" textLength="3.6" lengthAdjust="spacingAndGlyphs">20</text>
<text x="490.7" y="184" class="n" textLength="3.6" lengthAdjust="spacingAndGlyphs">21</text>
<text x="491.7" y="207.8" class="n" textLength="3.6" lengthAdjust="spacingAndGlyphs">22</text>
<text x="491.7" y="230.8" class="n" textLength="3.6" lengthAdjust="spacingAndGlyphs">23</text>
<text x="491" y="251.4" class="n" textLength="3.6" lengthAdjust="spacingAndGlyphs">24</text>
<text x="491" y="267.2" class="n" textLength="3.6" lengthAdjust="spacingAndGlyphs">25</text>
<text x="490.5" y="289" class="n" textLength="3.6" lengthAdjust="spacingAndGlyphs">26</text>
<text x="91.3" y="129.6" class="n" textLength="2.2" lengthAdjust="spacingAndGlyphs">7</text>
<text x="91.3" y="169.7" class="n" textLength="2.2" lengthAdjust="spacingAndGlyphs">6</text>
<text x="91.3" y="199.8" class="n" textLength="2.2" lengthAdjust="spacingAndGlyphs">5</text>
<text x="91.3" y="223.8" class="n" textLength="2.2" lengthAdjust="spacingAndGlyphs">4</text>
<text x="91.3" y="248.9" class="n" textLength="2.2" lengthAdjust="spacingAndGlyphs">3</text>
<text x="91.3" y="264.7" class="n" textLength="2.2" lengthAdjust="spacingAndGlyphs">2</text>
<text x="91.3" y="301" class="n" textLength="2.2" lengthAdjust="spacingAndGlyphs">1</text>
<text x="292.5" y="325" class="n" textLength="6" lengthAdjust="spacingAndGlyphs">A-A</text>
<text x="583.1" y="79" class="n" textLength="3.6" lengthAdjust="spacingAndGlyphs">33</text>
<text x="639.7" y="79" class="n" textLength="3.6" lengthAdjust="spacingAndGlyphs">32</text>
<text x="757.9" y="79" class="n" textLength="3.6" lengthAdjust="spacingAndGlyphs">37</text>
<text x="801.5" y="80" class="n" textLength="3.6" lengthAdjust="spacingAndGlyphs">38</text>
<text x="564.5" y="140.9" class="n" textLength="3.6" lengthAdjust="spacingAndGlyphs">35</text>
<text x="564.5" y="168.5" class="n" textLength="3.6" lengthAdjust="spacingAndGlyphs">36</text>
<text x="566.3" y="198" class="n" textLength="3.6" lengthAdjust="spacingAndGlyphs">27</text>
<text x="712.5" y="325" class="n" textLength="8" lengthAdjust="spacingAndGlyphs">B-B</text>
<text x="669" y="423" class="tb" style="text-anchor:middle" textLength="20" lengthAdjust="spacingAndGlyphs">排 样 图</text>
<text x="655.5" y="567.500" class="t" style="font-weight:bold" textLength="39" lengthAdjust="spacingAndGlyphs">展开尺寸 L=60.4mm</text>
<text x="655.5" y="573.500" class="t" style="font-weight:bold" textLength="26" lengthAdjust="spacingAndGlyphs">料厚 t=1 08AF</text>
<text x="740.5" y="579.500" class="tb" style="text-anchor:middle" textLength="13" lengthAdjust="spacingAndGlyphs">零件图</text>
<text x="686.7" y="458.6" class="d">23</text>
<text x="684.4" y="463.8" class="d">18.5</text>
<text x="657.8" y="482.5" class="d">8</text>
<text x="696.9" y="480.6" class="d">R2</text>
<text x="669.1" y="486.6" class="d">14</text>
<text x="685.5" y="493.4" class="d">10</text>
<text x="696.9" y="496.1" class="d">9</text>
<text x="715.1" y="470.6" class="d">R3</text>
<text x="723.8" y="471.5" class="d">1</text>
<text x="660" y="520" class="d">R5</text>
<text x="656.4" y="535.3" class="d">R8</text>
<text x="662.3" y="546.2" class="d">φ4</text>
<text x="682.1" y="513.9" class="d">12</text>
<text x="706" y="532.1" class="d">16</text>
<text x="690.1" y="546.6" class="d">10</text>
<text x="524.5" y="483.1" class="t" style="font-weight:bold" textLength="6.8" lengthAdjust="spacingAndGlyphs">技术要求</text>
<text x="524.5" y="488.9" class="t" style="font-weight:bold" textLength="43" lengthAdjust="spacingAndGlyphs">1.模具闭合高度应与压力机相适应</text>
<text x="524.5" y="494.9" class="t" style="font-weight:bold" textLength="33" lengthAdjust="spacingAndGlyphs">2.凸凹模间隙均匀0.1mm</text>
<text x="524.5" y="500.9" class="t" style="font-weight:bold" textLength="32" lengthAdjust="spacingAndGlyphs">3.导柱导套配合H7/h6</text>
<text x="524.5" y="506.9" class="t" style="font-weight:bold" textLength="55" lengthAdjust="spacingAndGlyphs">4.卸料板与凸模配合间隙单边为0.05mm</text>
<text x="524.5" y="512.9" class="t" style="font-weight:bold" textLength="33" lengthAdjust="spacingAndGlyphs">5.冲裁力F=258KN</text>
<text x="527.1" y="518.9" class="t" style="font-weight:bold" textLength="35.5" lengthAdjust="spacingAndGlyphs">卸料力Fx=12.9KN</text>
<text x="527.1" y="524.7" class="t" style="font-weight:bold" textLength="48" lengthAdjust="spacingAndGlyphs">推件力Ft=14.2KN,总冲压力</text>
<text x="527.1" y="530.4" class="t" style="font-weight:bold" textLength="52" lengthAdjust="spacingAndGlyphs">选用压力机J23-40开式双柱</text>
<text x="527.1" y="536.4" class="t" style="font-weight:bold" textLength="24" lengthAdjust="spacingAndGlyphs">闭合高度220</text>
<text x="524.5" y="542.2" class="t" style="font-weight:bold" textLength="18" lengthAdjust="spacingAndGlyphs">6.未注倒角</text>
<text x="524.5" y="548.7" class="t" style="font-weight:bold" textLength="70" lengthAdjust="spacingAndGlyphs">7.装配后应进行试冲合格后方可交付使用</text>
<text x="599.7" y="548.7" class="t" style="font-weight:bold" textLength="5.5" lengthAdjust="spacingAndGlyphs">mm</text>
<text x="806" y="383.7" class="tt" style="text-anchor:middle">33</text>
<text x="817.5" y="383.7" class="tt" textLength="31" lengthAdjust="spacingAndGlyphs">内六角螺钉M10X40</text>
<text x="868" y="383.7" class="tt" style="text-anchor:middle">3</text>
<text x="806" y="391.5" class="tt" style="text-anchor:middle">32</text>
<text x="817.5" y="391.5" class="tt" textLength="12.6" lengthAdjust="spacingAndGlyphs">导料板</text>
<text x="868" y="391.5" class="tt" style="text-anchor:middle">4</text>
<text x="806" y="399.3" class="tt" style="text-anchor:middle">31</text>
<text x="817.5" y="399.3" class="tt" textLength="31" lengthAdjust="spacingAndGlyphs">内六角螺钉M10X40</text>
<text x="868" y="399.3" class="tt" style="text-anchor:middle">3</text>
<text x="806" y="407.1" class="tt" style="text-anchor:middle">30</text>
<text x="817.5" y="407.1" class="tt" textLength="12.6" lengthAdjust="spacingAndGlyphs">卸料板</text>
<text x="868" y="407.1" class="tt" style="text-anchor:middle">3</text>
<text x="911" y="407.1" class="tt" textLength="19" lengthAdjust="spacingAndGlyphs">d10X40</text>
<text x="806" y="414.9" class="tt" style="text-anchor:middle">29</text>
<text x="817.5" y="414.9" class="tt" textLength="29.7" lengthAdjust="spacingAndGlyphs">圆柱销φ10X50</text>
<text x="868" y="414.9" class="tt" style="text-anchor:middle">3</text>
<text x="806" y="422.8" class="tt" style="text-anchor:middle">28</text>
<text x="817.5" y="422.8" class="tt" textLength="16.8" lengthAdjust="spacingAndGlyphs">卸料螺钉</text>
<text x="868" y="422.8" class="tt" style="text-anchor:middle">3</text>
<text x="911" y="422.8" class="tt" textLength="19" lengthAdjust="spacingAndGlyphs">d10X40</text>
<text x="806" y="430.6" class="tt" style="text-anchor:middle">27</text>
<text x="817.5" y="430.6" class="tt" textLength="8.4" lengthAdjust="spacingAndGlyphs">弹簧</text>
<text x="868" y="430.6" class="tt" style="text-anchor:middle">3</text>
<text x="880" y="430.6" class="tt" textLength="10" lengthAdjust="spacingAndGlyphs">45钢</text>
<text x="806" y="438.4" class="tt" style="text-anchor:middle">26</text>
<text x="817.5" y="438.4" class="tt" textLength="16.8" lengthAdjust="spacingAndGlyphs">上模座垫</text>
<text x="868" y="438.4" class="tt" style="text-anchor:middle">1</text>
<text x="880" y="438.4" class="tt" textLength="10" lengthAdjust="spacingAndGlyphs">45钢</text>
<text x="806" y="446.2" class="tt" style="text-anchor:middle">25</text>
<text x="817.5" y="446.2" class="tt" textLength="23.1" lengthAdjust="spacingAndGlyphs">内六角螺钉M8</text>
<text x="868" y="446.2" class="tt" style="text-anchor:middle">10</text>
<text x="806" y="454" class="tt" style="text-anchor:middle">24</text>
<text x="817.5" y="454" class="tt" textLength="21" lengthAdjust="spacingAndGlyphs">凸模固定板</text>
<text x="868" y="454" class="tt" style="text-anchor:middle">1</text>
<text x="880" y="454" class="tt" textLength="10" lengthAdjust="spacingAndGlyphs">45钢</text>
<text x="911" y="454" class="tt" textLength="22" lengthAdjust="spacingAndGlyphs">HRC40-45</text>
<text x="806" y="461.8" class="tt" style="text-anchor:middle">23</text>
<text x="817.5" y="461.8" class="tt" textLength="8.4" lengthAdjust="spacingAndGlyphs">凸模</text>
<text x="868" y="461.8" class="tt" style="text-anchor:middle">1</text>
<text x="880" y="461.8" class="tt" textLength="17" lengthAdjust="spacingAndGlyphs">Cr12MoV</text>
<text x="911" y="461.8" class="tt" textLength="22" lengthAdjust="spacingAndGlyphs">HRC58-62</text>
<text x="806" y="469.6" class="tt" style="text-anchor:middle">22</text>
<text x="817.5" y="469.6" class="tt" textLength="8.4" lengthAdjust="spacingAndGlyphs">模柄</text>
<text x="868" y="469.6" class="tt" style="text-anchor:middle">4</text>
<text x="806" y="477.4" class="tt" style="text-anchor:middle">21</text>
<text x="817.5" y="477.4" class="tt" textLength="8.4" lengthAdjust="spacingAndGlyphs">垫板</text>
<text x="868" y="477.4" class="tt" style="text-anchor:middle">3</text>
<text x="880" y="477.4" class="tt" textLength="10" lengthAdjust="spacingAndGlyphs">45钢</text>
<text x="806" y="485.2" class="tt" style="text-anchor:middle">20</text>
<text x="817.5" y="485.2" class="tt" textLength="16.8" lengthAdjust="spacingAndGlyphs">防转销钉</text>
<text x="868" y="485.2" class="tt" style="text-anchor:middle">3</text>
<text x="880" y="485.2" class="tt" textLength="10" lengthAdjust="spacingAndGlyphs">T10A</text>
<text x="911" y="485.2" class="tt" textLength="22" lengthAdjust="spacingAndGlyphs">HRC40-45</text>
<text x="806" y="493" class="tt" style="text-anchor:middle">19</text>
<text x="817.5" y="493" class="tt" textLength="16.8" lengthAdjust="spacingAndGlyphs">冲孔凸模</text>
<text x="868" y="493" class="tt" style="text-anchor:middle">1</text>
<text x="880" y="493" class="tt" textLength="10" lengthAdjust="spacingAndGlyphs">T10A</text>
<text x="911" y="493" class="tt" textLength="22" lengthAdjust="spacingAndGlyphs">HRC40-45</text>
<text x="806" y="500.8" class="tt" style="text-anchor:middle">18</text>
<text x="817.5" y="500.8" class="tt" textLength="12.6" lengthAdjust="spacingAndGlyphs">上模座</text>
<text x="868" y="500.8" class="tt" style="text-anchor:middle">1</text>
<text x="880" y="500.8" class="tt" textLength="10" lengthAdjust="spacingAndGlyphs">45钢</text>
<text x="911" y="500.8" class="tt" textLength="22" lengthAdjust="spacingAndGlyphs">HRC40-45</text>
<text x="806" y="508.7" class="tt" style="text-anchor:middle">17</text>
<text x="817.5" y="508.7" class="tt" textLength="26.4" lengthAdjust="spacingAndGlyphs">内六角螺钉M10</text>
<text x="868" y="508.7" class="tt" style="text-anchor:middle">8</text>
<text x="806" y="516.5" class="tt" style="text-anchor:middle">16</text>
<text x="817.5" y="516.5" class="tt" textLength="16.8" lengthAdjust="spacingAndGlyphs">切断凸模</text>
<text x="868" y="516.5" class="tt" style="text-anchor:middle">3</text>
<text x="880" y="516.5" class="tt" textLength="17" lengthAdjust="spacingAndGlyphs">Cr12MoV</text>
<text x="911" y="516.5" class="tt" textLength="22" lengthAdjust="spacingAndGlyphs">HRC58-62</text>
<text x="806" y="524.3" class="tt" style="text-anchor:middle">15</text>
<text x="817.5" y="524.3" class="tt" textLength="16.8" lengthAdjust="spacingAndGlyphs">弯曲凸模</text>
<text x="868" y="524.3" class="tt" style="text-anchor:middle">3</text>
<text x="880" y="524.3" class="tt" textLength="17" lengthAdjust="spacingAndGlyphs">Cr12MoV</text>
<text x="911" y="524.3" class="tt" textLength="22" lengthAdjust="spacingAndGlyphs">HRC58-62</text>
<text x="806" y="532.1" class="tt" style="text-anchor:middle">14</text>
<text x="817.5" y="532.1" class="tt" textLength="12.6" lengthAdjust="spacingAndGlyphs">导正销</text>
<text x="868" y="532.1" class="tt" style="text-anchor:middle">3</text>
<text x="880" y="532.1" class="tt" textLength="17" lengthAdjust="spacingAndGlyphs">Cr12MoV</text>
<text x="911" y="532.1" class="tt" textLength="22" lengthAdjust="spacingAndGlyphs">HRC58-62</text>
<text x="806" y="539.9" class="tt" style="text-anchor:middle">13</text>
<text x="817.5" y="539.9" class="tt" textLength="8.4" lengthAdjust="spacingAndGlyphs">导套</text>
<text x="868" y="539.9" class="tt" style="text-anchor:middle">1</text>
<text x="806" y="547.7" class="tt" style="text-anchor:middle">12</text>
<text x="817.5" y="547.7" class="tt" textLength="26.4" lengthAdjust="spacingAndGlyphs">内六角螺钉M12</text>
<text x="868" y="547.7" class="tt" style="text-anchor:middle">3</text>
<text x="806" y="555.5" class="tt" style="text-anchor:middle">11</text>
<text x="817.5" y="555.5" class="tt" textLength="8.4" lengthAdjust="spacingAndGlyphs">导柱</text>
<text x="868" y="555.5" class="tt" style="text-anchor:middle">3</text>
<text x="880" y="555.5" class="tt" textLength="17" lengthAdjust="spacingAndGlyphs">Cr12MoV</text>
<text x="911" y="555.5" class="tt" textLength="22" lengthAdjust="spacingAndGlyphs">HRC58-62</text>
<text x="806" y="563.3" class="tt" style="text-anchor:middle">10</text>
<text x="817.5" y="563.3" class="tt" textLength="16.8" lengthAdjust="spacingAndGlyphs">凹模镶块</text>
<text x="868" y="563.3" class="tt" style="text-anchor:middle">1</text>
<text x="880" y="563.3" class="tt" textLength="10" lengthAdjust="spacingAndGlyphs">T10A</text>
<text x="911" y="563.3" class="tt" textLength="22" lengthAdjust="spacingAndGlyphs">HRC40-45</text>
<text x="806" y="571.1" class="tt" style="text-anchor:middle">9</text>
<text x="817.5" y="571.1" class="tt" textLength="16.8" lengthAdjust="spacingAndGlyphs">凹模垫板</text>
<text x="868" y="571.1" class="tt" style="text-anchor:middle">1</text>
<text x="880" y="571.1" class="tt" textLength="10" lengthAdjust="spacingAndGlyphs">T10A</text>
<text x="911" y="571.1" class="tt" textLength="22" lengthAdjust="spacingAndGlyphs">HRC40-45</text>
<text x="806" y="578.9" class="tt" style="text-anchor:middle">8</text>
<text x="817.5" y="578.9" class="tt" textLength="12.6" lengthAdjust="spacingAndGlyphs">凹模板</text>
<text x="868" y="578.9" class="tt" style="text-anchor:middle">1</text>
<text x="880" y="578.9" class="tt" textLength="10" lengthAdjust="spacingAndGlyphs">45钢</text>
<text x="911" y="578.9" class="tt" textLength="22" lengthAdjust="spacingAndGlyphs">HRC40-45</text>
<text x="806" y="586.7" class="tt" style="text-anchor:middle">7</text>
<text x="817.5" y="586.7" class="tt" textLength="12.6" lengthAdjust="spacingAndGlyphs">顶料销</text>
<text x="868" y="586.7" class="tt" style="text-anchor:middle">1</text>
<text x="880" y="586.7" class="tt" textLength="17" lengthAdjust="spacingAndGlyphs">Cr12MoV</text>
<text x="911" y="586.7" class="tt" textLength="22" lengthAdjust="spacingAndGlyphs">HRC58-62</text>
<text x="806" y="594.6" class="tt" style="text-anchor:middle">6</text>
<text x="817.5" y="594.6" class="tt" textLength="12.6" lengthAdjust="spacingAndGlyphs">浮顶器</text>
<text x="868" y="594.6" class="tt" style="text-anchor:middle">1</text>
<text x="880" y="594.6" class="tt" textLength="10" lengthAdjust="spacingAndGlyphs">45钢</text>
<text x="911" y="594.6" class="tt" textLength="22" lengthAdjust="spacingAndGlyphs">HRC40-45</text>
<text x="806" y="602.4" class="tt" style="text-anchor:middle">5</text>
<text x="817.5" y="602.4" class="tt" textLength="16.8" lengthAdjust="spacingAndGlyphs">下模垫板</text>
<text x="868" y="602.4" class="tt" style="text-anchor:middle">1</text>
<text x="880" y="602.4" class="tt" textLength="17" lengthAdjust="spacingAndGlyphs">Cr12MoV</text>
<text x="911" y="602.4" class="tt" textLength="22" lengthAdjust="spacingAndGlyphs">HRC40-45</text>
<text x="806" y="610.2" class="tt" style="text-anchor:middle">4</text>
<text x="817.5" y="610.2" class="tt" textLength="21" lengthAdjust="spacingAndGlyphs">下模座固定</text>
<text x="868" y="610.2" class="tt" style="text-anchor:middle">1</text>
<text x="880" y="610.2" class="tt" textLength="17" lengthAdjust="spacingAndGlyphs">Cr12MoV</text>
<text x="911" y="610.2" class="tt" textLength="22" lengthAdjust="spacingAndGlyphs">HRC40-45</text>
<text x="806" y="618" class="tt" style="text-anchor:middle">3</text>
<text x="817.5" y="618" class="tt" textLength="12.6" lengthAdjust="spacingAndGlyphs">挡料销</text>
<text x="868" y="618" class="tt" style="text-anchor:middle">4</text>
<text x="806" y="625.8" class="tt" style="text-anchor:middle">2</text>
<text x="817.5" y="625.8" class="tt" textLength="26.4" lengthAdjust="spacingAndGlyphs">内六角螺钉M10</text>
<text x="868" y="625.8" class="tt" style="text-anchor:middle">3</text>
<text x="806" y="633.6" class="tt" style="text-anchor:middle">1</text>
<text x="817.5" y="633.6" class="tt" textLength="26.4" lengthAdjust="spacingAndGlyphs">内六角螺钉M12</text>
<text x="868" y="633.6" class="tt" style="text-anchor:middle">1</text>
<text x="806" y="641.8" class="tt" textLength="11" lengthAdjust="spacingAndGlyphs" style="text-anchor:middle">序号</text>
<text x="837.5" y="641.8" class="tt" textLength="26" lengthAdjust="spacingAndGlyphs" style="text-anchor:middle">名　　称</text>
<text x="868" y="641.8" class="tt" textLength="11" lengthAdjust="spacingAndGlyphs" style="text-anchor:middle">数量</text>
<text x="891.5" y="641.8" class="tt" textLength="18" lengthAdjust="spacingAndGlyphs" style="text-anchor:middle">材　料</text>
<text x="926" y="641.8" class="tt" textLength="18" lengthAdjust="spacingAndGlyphs" style="text-anchor:middle">备　注</text>
<text x="834" y="653.5" class="tz" textLength="67" lengthAdjust="spacingAndGlyphs" style="text-anchor:middle">冲压件弯曲件多工位(级进模)装配图</text>
<text x="803" y="661.5" class="tt" textLength="12" lengthAdjust="spacingAndGlyphs">设 计</text>
<text x="828" y="661.5" class="tt" textLength="12" lengthAdjust="spacingAndGlyphs">日 期</text>
<text x="803" y="668" class="tt" textLength="12" lengthAdjust="spacingAndGlyphs">审 核</text>
<text x="828" y="668" class="tt" textLength="12" lengthAdjust="spacingAndGlyphs">日 期</text>
<text x="803" y="674.5" class="tt" textLength="12" lengthAdjust="spacingAndGlyphs">班 级</text>
<text x="876" y="649.5" class="tt" textLength="12" lengthAdjust="spacingAndGlyphs">比 例</text>
<text x="876" y="655.5" class="tt" textLength="12" lengthAdjust="spacingAndGlyphs">数 量</text>
<text x="876" y="661.5" class="tt" textLength="12" lengthAdjust="spacingAndGlyphs">重 量</text>
<text x="899" y="649.5" class="tt" textLength="12" lengthAdjust="spacingAndGlyphs">1:1</text>
<text x="858.5" y="661.5" class="tt" textLength="20" lengthAdjust="spacingAndGlyphs" style="text-anchor:middle">2009.06</text>
<text x="858.5" y="672" class="tt" textLength="16" lengthAdjust="spacingAndGlyphs" style="text-anchor:middle">2011.05</text>
<text x="932" y="652" class="tt" textLength="9" lengthAdjust="spacingAndGlyphs" style="text-anchor:middle">D-1</text>
<text x="925.5" y="661.5" class="tt" textLength="10" lengthAdjust="spacingAndGlyphs" style="text-anchor:middle">共 张</text>
<text x="938" y="661.5" class="tt" textLength="10" lengthAdjust="spacingAndGlyphs" style="text-anchor:middle">第 张</text>
</svg>
<div id="tb"><svg width="986" height="18" viewBox="0 0 986 18"><rect width="986" height="18" fill="#f0f0f0"/><rect y="14" width="986" height="1" fill="#b4b4b4"/><rect y="15" width="986" height="1" fill="#fafafa"/><rect y="16" width="986" height="1" fill="#bdbdbd"/><rect y="17" width="986" height="1" fill="#5a5a5a"/><rect x="25" y="0" width="1" height="12" fill="#a0a0a0"/><rect x="26" y="0" width="1" height="12" fill="#fff"/><rect x="146" y="0" width="1" height="12" fill="#a0a0a0"/><rect x="147" y="0" width="1" height="12" fill="#fff"/><rect x="224" y="0" width="1" height="12" fill="#a0a0a0"/><rect x="225" y="0" width="1" height="12" fill="#fff"/><rect x="323" y="0" width="1" height="12" fill="#a0a0a0"/><rect x="324" y="0" width="1" height="12" fill="#fff"/><rect x="466" y="0" width="1" height="12" fill="#a0a0a0"/><rect x="467" y="0" width="1" height="12" fill="#fff"/><path d="M5 0V8L10 11L14 8V0Z" fill="#e8eef6" stroke="#b8c4d4" stroke-width=".6"/><circle cx="14" cy="-3" r="7.500" fill="#2f7fd8"/><path d="M8 1Q13 4 19 -1" stroke="#e33" stroke-width="1.4" fill="none"/><path d="M11 -4Q15 2 12 6" stroke="#ffd83a" stroke-width="1.2" fill="none"/><path d="M9 0Q12 -3 16 2" stroke="#5c5" stroke-width="1.5" fill="none"/><g stroke="#1e3a8a" fill="none" stroke-width="1.3"><path d="M33 1L44 4M33 5L46 0"/><circle cx="45.5" cy="6.5" r="2.2"/><circle cx="42" cy="3" r="1.5"/></g><path d="M55.500 -1H64.500V7H55.500Z" fill="#c9ddf0" stroke="#3b78c4"/><path d="M58.500 -2V9.500H70.500V1L67.500 -2Z" fill="#cfe0f0" stroke="#3b78c4"/><path d="M59.500 4H69.500V8.500H59.500Z" fill="#eef4fa"/><path d="M79 -1Q77 5 82 8Q88 11 92 5Q93 1 91 -1Z" fill="#e9c15e" stroke="#c79a3a"/><path d="M81.500 -2V4.500H89.500V0L87.500 -2Z" fill="#e4edf7" stroke="#3b78c4"/><path d="M115 -1L109 5" stroke="#b0622a" stroke-width="2"/><path d="M110 3L103 8Q107 9 111 5Z" fill="#111"/><path d="M112 1L109 5" stroke="#ccc" stroke-width="2"/><path d="M131 3L137 -2H140L134 5Z" fill="#f4d11a" stroke="#b89500" stroke-width=".5"/><rect x="126" y="2" width="8" height="7" fill="#f08a4b" stroke="#d86a2a"/><rect x="124" y="8" width="3" height="3" fill="#1560c8"/><path d="M155 0V4H152L158 10L164 4H161V0Z" fill="#c9c9c9"/><path d="M177 1H183L180 4Z" fill="#b4bcd4"/><path d="M196 0V4H193L199 10L205 4H202V0Z" fill="#c9c9c9"/><path d="M213 1H219L216 4Z" fill="#b4bcd4"/><path d="M232 0Q233 5 238 7L241 4L244 0Z" fill="#d98a8a" stroke="#b55" stroke-width=".6"/><path d="M240 7L244 3L248 7V11H242Z" fill="#2a5ea8"/><circle cx="259" cy="-2" r="5.500" fill="#dfeaf6" stroke="#7f98b8" stroke-width="1.6"/><path d="M263 3L269 9.500" stroke="#c98a3a" stroke-width="2.4"/><path d="M262 3L268 9" stroke="#444" stroke-width=".6"/><path d="M265 1H270" stroke="#1a4a9a" stroke-width="1.2"/><circle cx="282" cy="-2" r="5.500" fill="#dfeaf6" stroke="#7f98b8" stroke-width="1.6"/><path d="M286 3L292 9.500" stroke="#c98a3a" stroke-width="2.4"/><path d="M285 3L291 9" stroke="#444" stroke-width=".6"/><rect x="279" y="-2" width="5" height="4" fill="none" stroke="#1a4a9a" stroke-width="1.2"/><path d="M293 8V12H289Z" fill="#000"/><circle cx="305" cy="-2" r="5.500" fill="#dfeaf6" stroke="#7f98b8" stroke-width="1.6"/><path d="M309 3L315 9.500" stroke="#c98a3a" stroke-width="2.4"/><path d="M308 3L314 9" stroke="#444" stroke-width=".6"/><path d="M303 -1H309V2H303Z" fill="#1a4a9a"/><path d="M330 2Q334 -1 338 2" stroke="#d88" stroke-width="2" fill="none"/><path d="M331 4Q334 6 337 4M331 7Q334 9 337 7" stroke="#4a78c0" stroke-width="1.2" fill="none"/><text x="340" y="10.5" font-family="Liberation Sans,sans-serif" font-size="9" fill="#223">A</text><rect x="352.5" y="-2" width="15" height="12" fill="#e6eefb" stroke="#2a5ec8" stroke-width="1.4"/><rect x="356" y="1" width="1.500" height="7" fill="#f4d11a"/><rect x="361" y="-1" width="2.500" height="2.500" fill="#f4d11a"/><rect x="361" y="4" width="3.500" height="3.500" fill="#f4d11a"/><rect x="376" y="-2" width="8" height="12" fill="#e6eefb" stroke="#2a5ec8" stroke-width="1.400"/><rect x="378" y="1" width="2" height="2" fill="#9ac"/><rect x="378" y="5" width="2" height="2" fill="#9ac"/><path d="M388 0V6M386 4L388 6.500L390 4" stroke="#124" fill="none"/><rect x="387" y="6.500" width="3" height="3" fill="#f4e11a" stroke="#2a5ec8" stroke-width=".6"/><path d="M398 0H414V11H398Z" fill="#c4cdd6"/><path d="M398 6Q406 2 414 8V11H398Z" fill="#7fa8c8"/><path d="M400 3Q406 -1 412 3" stroke="#eef" stroke-width="2" fill="none"/><rect x="423" y="-1" width="14" height="11" fill="#d8d8e0" stroke="#999" stroke-width=".8"/><rect x="421" y="-3" width="14" height="11" fill="#eef0f6" stroke="#aaa" stroke-width=".6"/><path d="M424 0Q422 4 426 5Q429 7 431 4Q435 3 433 -1" stroke="#e8202a" stroke-width="1.700" fill="none"/><rect x="446" y="-2" width="12" height="13" fill="#111"/><rect x="448" y="2" width="2" height="1.5" fill="#e33"/><rect x="448" y="5" width="2" height="2" fill="#fff"/><rect x="448" y="8" width="2" height="2" fill="#fff"/><rect x="451.5" y="2" width="2" height="1.5" fill="#e33"/><rect x="451.5" y="5" width="2" height="2" fill="#fff"/><rect x="451.5" y="8" width="2" height="2" fill="#fff"/><rect x="455" y="2" width="2" height="1.5" fill="#e33"/><rect x="455" y="5" width="2" height="2" fill="#fff"/><rect x="455" y="8" width="2" height="2" fill="#fff"/><rect x="474" y="-4" width="16" height="14" rx="2.500" fill="#2a56b0"/><text x="482" y="9" text-anchor="middle" font-family="Liberation Sans,sans-serif" font-weight="bold" font-size="13" fill="#fff">?</text><rect x="496" y="0" width="1" height="14" fill="#a8a8a8"/><rect x="497" y="0" width="1" height="14" fill="#fff"/><rect x="500" y="0" width="3" height="14" fill="#fbfbfb"/><rect x="503" y="0" width="1" height="14" fill="#b0b0b0"/><rect x="504" y="0" width="3" height="14" fill="#fbfbfb"/><rect x="507" y="0" width="1" height="14" fill="#b0b0b0"/><g stroke="#4a6a9a" stroke-width=".7"><path d="M514 2L522 -1L529 2L522 6Z" fill="#a9c4e4"/><path d="M514 4.500L522 1.500L529 4.500L522 8.500Z" fill="#b9d0ea"/><path d="M515 6.500L523 3.500L530 6.500L523 10Z" fill="#a9c4e4"/></g><rect x="535" y="0" width="298" height="13" fill="#fff"/><rect x="534" y="0" width="1" height="13" fill="#e3e3e3"/><path d="M541 0L544 5H547L550 0" fill="#fffbe0" stroke="#d8b820" stroke-width="1.2"/><rect x="544" y="5" width="3" height="3.500" fill="#4a5a9a"/><circle cx="561.500" cy="1" r="6.500" fill="#ffe23a" stroke="#e8b800" stroke-width=".8"/><path d="M555 8L557 6M568 8L566 6" stroke="#e8a000" stroke-width="1.200"/><rect x="575" y="0" width="9" height="8" fill="#fff" stroke="#4a6a9a" stroke-width="1"/><circle cx="576" cy="1" r="5" fill="#8db3dc" stroke="#5a80b0" stroke-width=".8"/><circle cx="576" cy="1" r="2" fill="#e8e0b0"/><path d="M590 2V0H593V3" fill="none" stroke="#887a10" stroke-width="1"/><rect x="592" y="1" width="10" height="8" rx="1" fill="#d4d63a" stroke="#8a8a10" stroke-width=".8"/><path d="M594 3H599M594 5H599M594 7H599" stroke="#f4f6a0" stroke-width=".8"/><rect x="606.5" y="-2" width="9" height="10" fill="#fff" stroke="#000" stroke-width="1.3"/><text x="620" y="7.2" font-family="Liberation Sans,Noto Sans CJK SC,sans-serif" font-size="12" fill="#000" textLength="36">轴头线</text><path d="M822 2H830L826 6.500Z" fill="#000"/><g stroke="#4a6a9a" stroke-width=".6"><path d="M840 0L848 -3L854 0L847 4Z" fill="#a9c4e4"/><path d="M839 3L847 0L854 3L846 7Z" fill="#f4d81a" stroke="#b89a00"/></g><path d="M838 10L842 6M842 9V6H839" stroke="#1a3a8a" stroke-width="1.200" fill="none"/><g stroke="#4a6a9a" stroke-width=".7"><path d="M861 1L869 -2L876 1L869 5Z" fill="#a9c4e4"/><path d="M861 3.500L869 .5L876 3.500L869 7.500Z" fill="#b9d0ea"/></g><path d="M866 -1H871V1H873L868.500 4L864 1H866Z" fill="#1a3a8a"/><rect x="883" y="0" width="1" height="14" fill="#a8a8a8"/><rect x="884" y="0" width="1" height="14" fill="#fff"/><rect x="886" y="0" width="3" height="14" fill="#fbfbfb"/><rect x="889" y="0" width="1" height="14" fill="#b0b0b0"/><rect x="890" y="0" width="3" height="14" fill="#fbfbfb"/><rect x="893" y="0" width="1" height="14" fill="#b0b0b0"/><text x="901" y="7" font-family="Liberation Sans,sans-serif" font-size="13" font-style="italic" fill="#111">A</text><path d="M917 -1L911 5" stroke="#d8802a" stroke-width="2"/><path d="M912 3L906 9Q910 9 913 5Z" fill="#111"/><rect x="922" y="0" width="64" height="13" fill="#fff"/><text x="926" y="6.8" font-family="Liberation Sans,Noto Sans CJK SC,sans-serif" font-size="12" fill="#000" textLength="24">文字</text></svg></div>
</body></html>
